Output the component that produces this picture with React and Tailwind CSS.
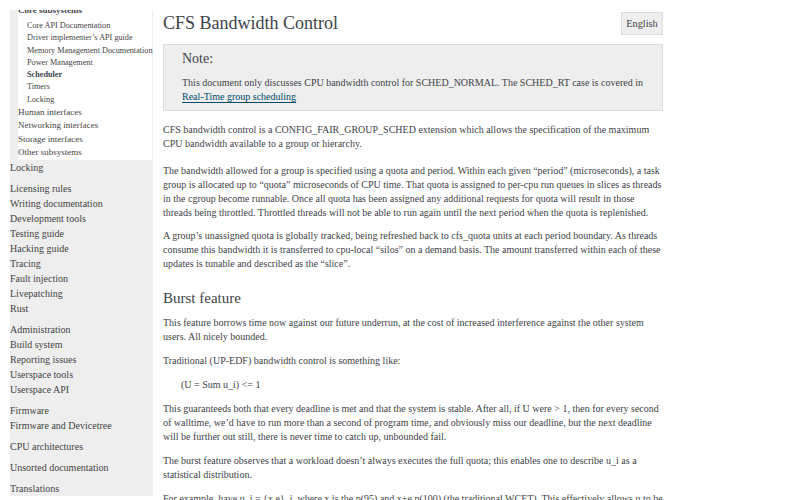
import React from "react";

const serif = { fontFamily: '"Liberation Serif", "DejaVu Serif", serif' };

const subItems = [
  { t: "Core API Documentation" },
  { t: "Driver implementer\u2019s API guide" },
  { t: "Memory Management Documentation" },
  { t: "Power Management" },
  { t: "Scheduler", b: true },
  { t: "Timers" },
  { t: "Locking" },
];

const secondItems = ["Human interfaces", "Networking interfaces", "Storage interfaces", "Other subsystems"];

const groups = [
  ["Locking"],
  ["Licensing rules", "Writing documentation", "Development tools", "Testing guide", "Hacking guide", "Tracing", "Fault injection", "Livepatching", "Rust"],
  ["Administration", "Build system", "Reporting issues", "Userspace tools", "Userspace API"],
  ["Firmware", "Firmware and Devicetree"],
  ["CPU architectures"],
  ["Unsorted documentation"],
  ["Translations"],
];

function Sidebar() {
  return (
    <div className="ml-[10px] w-[143px] shrink-0 pt-[10px]">
      <div className="bg-[#eeeeee] overflow-hidden">
        <div className="ml-[8px] mr-[1px] bg-white">
          <div className="-mt-[6px] text-[9px] leading-[13px] font-bold text-[#3e4349] whitespace-nowrap">Core subsystems</div>
          <ul className="pl-[9px] mt-[3px]">
            {subItems.map((s) => (
              <li key={s.t} className={"text-[8.2px] leading-[12.3px] whitespace-nowrap " + (s.b ? "font-bold text-[#3e4349]" : "text-[#444]")}>{s.t}</li>
            ))}
          </ul>
          <ul className="pb-[1px]">
            {secondItems.map((s) => (
              <li key={s} className="text-[9px] leading-[13.3px] text-[#444] whitespace-nowrap">{s}</li>
            ))}
          </ul>
        </div>
        <div>
          {groups.map((g, i) => (
            <ul key={i} className={i === 0 ? "" : "mt-[6px]"}>
              {g.map((s) => (
                <li key={s} className="text-[10px] leading-[15px] text-[#444] whitespace-nowrap">{s}</li>
              ))}
            </ul>
          ))}
        </div>
      </div>
    </div>
  );
}

function P({ children, className = "" }) {
  return <p className={"text-[10px] leading-[14px] " + className}>{children}</p>;
}

export default function App() {
  return (
    <div className="flex w-[800px] h-[500px] overflow-hidden bg-white text-[#3e4349]" style={serif}>
      <Sidebar />
      <div className="ml-[10px] w-[500px] shrink-0">
        <div className="flex items-start justify-between pt-[12px]">
          <h1 className="text-[18px] leading-[22px] font-normal mt-[0px]">CFS Bandwidth Control</h1>
          <div className="bg-[#eeeeee] border border-[#dddddd] text-[10.3px] leading-[14px] w-[42px] h-[23px] flex items-center justify-center">English</div>
        </div>
        <div className="mt-[9px] bg-[#eeeeee] border border-[#dddddd] px-[18px] pt-[4px] pb-[6px]">
          <div className="text-[14px] leading-[20px]">Note:</div>
          <p className="mt-[7px] text-[10px] leading-[14px]">
            This document only discusses CPU bandwidth control for SCHED_NORMAL. The SCHED_RT case is covered in{" "}
            <a className="text-[#004b6b] underline decoration-[#004b6b] underline-offset-2">Real-Time group scheduling</a>
          </p>
        </div>
        <div className="mt-[12px]">
          <P className="mb-[13px]">CFS bandwidth control is a CONFIG_FAIR_GROUP_SCHED extension which allows the specification of the maximum CPU bandwidth available to a group or hierarchy.</P>
          <P className="mb-[9px]">The bandwidth allowed for a group is specified using a quota and period. Within each given {"\u201c"}period{"\u201d"} (microseconds), a task group is allocated up to {"\u201c"}quota{"\u201d"} microseconds of CPU time. That quota is assigned to per-cpu run queues in slices as threads in the cgroup become runnable. Once all quota has been assigned any additional requests for quota will result in those threads being throttled. Throttled threads will not be able to run again until the next period when the quota is replenished.</P>
          <P>A group{"\u2019"}s unassigned quota is globally tracked, being refreshed back to cfs_quota units at each period boundary. As threads consume this bandwidth it is transferred to cpu-local {"\u201c"}silos{"\u201d"} on a demand basis. The amount transferred within each of these updates is tunable and described as the {"\u201c"}slice{"\u201d"}.</P>
          <h2 className="text-[15px] leading-[20px] font-normal mt-[17px] mb-[8px]">Burst feature</h2>
          <P className="mb-[10px]">This feature borrows time now against our future underrun, at the cost of increased interference against the other system users. All nicely bounded.</P>
          <P className="mb-[10px]">Traditional (UP-EDF) bandwidth control is something like:</P>
          <P className="mb-[10px] ml-[18px]">(U = Sum u_i) {"<"}= 1</P>
          <P className="mb-[10px]">This guaranteeds both that every deadline is met and that the system is stable. After all, if U were {">"} 1, then for every second of walltime, we{"\u2019"}d have to run more than a second of program time, and obviously miss our deadline, but the next deadline will be further out still, there is never time to catch up, unbounded fail.</P>
          <P className="mb-[10px]">The burst feature observes that a workload doesn{"\u2019"}t always executes the full quota; this enables one to describe u_i as a statistical distribution.</P>
          <P className="mb-[10px]">For example, have u_i = {"{"}x,e{"}"}_i, where x is the p(95) and x+e p(100) (the traditional WCET). This effectively allows u to be smaller, increasing the efficiency.</P>
        </div>
      </div>
    </div>
  );
}
